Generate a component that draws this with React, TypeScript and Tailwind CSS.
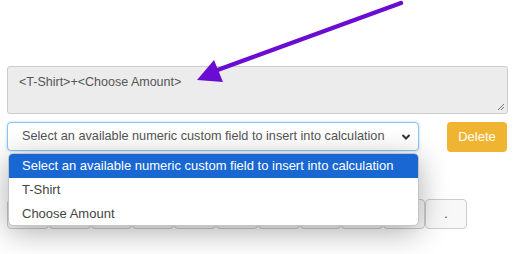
import React from "react";

const keys = ["", "", "", "", "", "", "", "", "", "", "."];

export default function App() {
  return (
    <div className="relative w-[516px] h-[254px] overflow-hidden bg-white font-['Liberation_Sans',Arial,sans-serif]">
      <div className="pt-[66px] pl-[7px]">
        {/* formula box */}
        <div className="relative w-[501px] h-[48px] rounded-[3px] border border-[#cccccc] bg-[#ececec] pl-[11px] pt-[6px] text-[12.5px] text-[#555555]">
          &lt;T-Shirt&gt;+&lt;Choose Amount&gt;
          <svg className="absolute right-[2px] bottom-[2px]" width="8" height="8" viewBox="0 0 8 8">
            <path d="M7 1 L1 7 M7 4 L4 7" stroke="#777" strokeWidth="1" />
          </svg>
        </div>

        <div className="mt-[8px] flex items-start">
          <div className="relative w-[412px] h-[29px] rounded-[4px] border border-[#8cc4f2] bg-white flex items-center pl-[14px] pr-[6px] text-[12.7px] text-[#555555] shadow-[0_0_3px_rgba(102,175,233,0.5)]">
            <span className="flex-1 whitespace-nowrap">Select an available numeric custom field to insert into calculation</span>
            <svg width="10" height="8" viewBox="0 0 10 8" className="mr-[1px]">
              <path d="M1.5 2 L5 5.5 L8.5 2" fill="none" stroke="#333" strokeWidth="2" />
            </svg>

            {/* open options list */}
            <div className="absolute z-10 left-0 top-[30px] w-[411px] overflow-hidden rounded-[5px] border border-[#c4c4c4] bg-white text-[13px] whitespace-nowrap shadow-[0_6px_30px_rgba(0,0,0,0.32)]">
              <div className="h-[24px] bg-[#1967d2] pl-[13px] flex items-center text-white">
                Select an available numeric custom field to insert into calculation
              </div>
              <div className="h-[24px] pl-[13px] flex items-center text-[#444]">T-Shirt</div>
              <div className="h-[23px] pl-[13px] flex items-center text-[#444]">Choose Amount</div>
            </div>
          </div>
          <button className="ml-[28px] w-[60px] h-[30px] rounded-[4px] bg-[#efb432] text-white text-[13px]">
            Delete
          </button>
        </div>

        <div className="mt-[47px] flex">
          {keys.map((k, i) => (
            <div
              key={i}
              className="w-[41.8px] h-[30px] rounded-[4px] border border-[#cccccc] bg-[#f8f8f8] flex items-center justify-center text-[12px] text-[#333]"
            >
              {k}
            </div>
          ))}
        </div>
      </div>

      {/* annotation arrow */}
      <svg className="absolute left-0 top-0" width="516" height="254" viewBox="0 0 516 254">
        <line x1="401" y1="3" x2="212" y2="72" stroke="#6a0cd2" strokeWidth="4.5" strokeLinecap="round" />
        <polygon points="197,80 214,60 223,82" fill="#6a0cd2" />
      </svg>
    </div>
  );
}
